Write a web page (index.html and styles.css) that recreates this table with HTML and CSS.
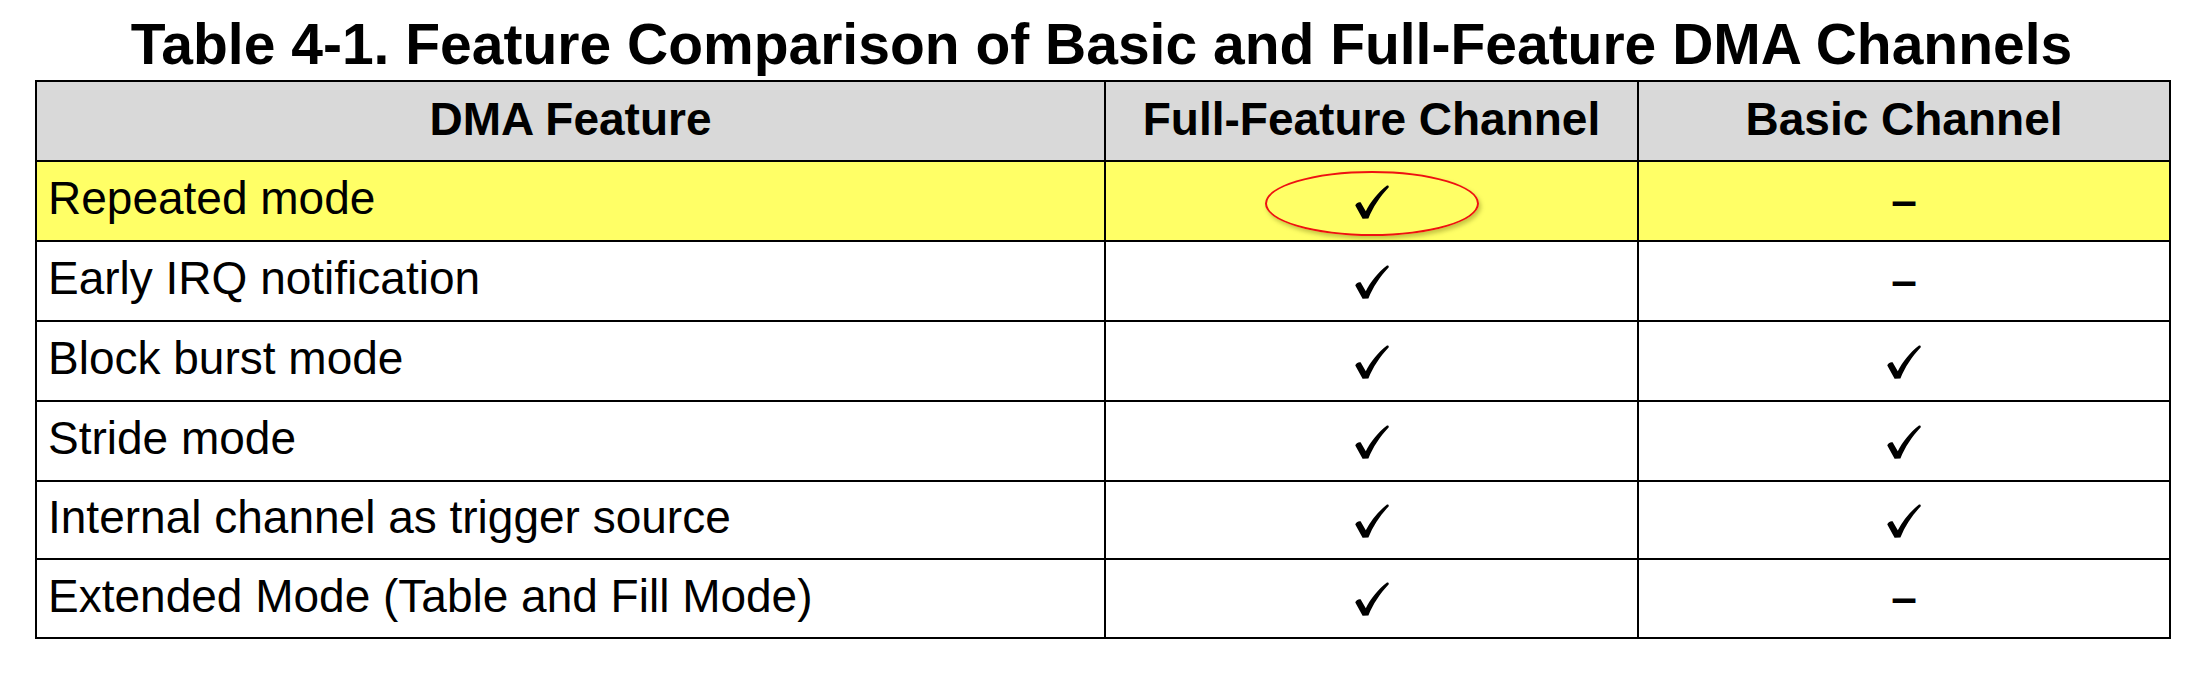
FILE: index.html
```html
<!DOCTYPE html>
<html lang="en">
<head>
<meta charset="utf-8">
<title>Table 4-1. Feature Comparison of Basic and Full-Feature DMA Channels</title>
<link rel="stylesheet" href="styles.css">
</head>
<body>
<h1 class="caption">Table 4-1. Feature Comparison of Basic and Full-Feature DMA Channels</h1>
<table class="cmp">
  <colgroup>
    <col class="c-feature">
    <col class="c-full">
    <col class="c-basic">
  </colgroup>
  <thead>
    <tr class="row-head">
      <th>DMA Feature</th>
      <th>Full-Feature Channel</th>
      <th class="last">Basic Channel</th>
    </tr>
  </thead>
  <tbody>
    <tr class="row hl">
      <td class="name">Repeated mode</td>
      <td class="mark"><span class="chk circled"><svg viewBox="0 0 34 34" width="34" height="34" aria-label="yes"><path d="M0.3 20.6C0.8 18.4 3.6 16.6 5.6 17.3L10.8 26.3C15.5 17 22.5 8 32 0.6C33.2 0.2 34.2 1.3 33.6 2.4C25 11.5 18 22 13.4 33.4L7.6 33.8Z"/></svg><span class="ring"></span></span></td>
      <td class="mark na last">–</td>
    </tr>
    <tr class="row">
      <td class="name">Early IRQ notification</td>
      <td class="mark"><span class="chk"><svg viewBox="0 0 34 34" width="34" height="34" aria-label="yes"><path d="M0.3 20.6C0.8 18.4 3.6 16.6 5.6 17.3L10.8 26.3C15.5 17 22.5 8 32 0.6C33.2 0.2 34.2 1.3 33.6 2.4C25 11.5 18 22 13.4 33.4L7.6 33.8Z"/></svg></span></td>
      <td class="mark na last">–</td>
    </tr>
    <tr class="row">
      <td class="name">Block burst mode</td>
      <td class="mark"><span class="chk"><svg viewBox="0 0 34 34" width="34" height="34" aria-label="yes"><path d="M0.3 20.6C0.8 18.4 3.6 16.6 5.6 17.3L10.8 26.3C15.5 17 22.5 8 32 0.6C33.2 0.2 34.2 1.3 33.6 2.4C25 11.5 18 22 13.4 33.4L7.6 33.8Z"/></svg></span></td>
      <td class="mark last"><span class="chk"><svg viewBox="0 0 34 34" width="34" height="34" aria-label="yes"><path d="M0.3 20.6C0.8 18.4 3.6 16.6 5.6 17.3L10.8 26.3C15.5 17 22.5 8 32 0.6C33.2 0.2 34.2 1.3 33.6 2.4C25 11.5 18 22 13.4 33.4L7.6 33.8Z"/></svg></span></td>
    </tr>
    <tr class="row">
      <td class="name">Stride mode</td>
      <td class="mark"><span class="chk"><svg viewBox="0 0 34 34" width="34" height="34" aria-label="yes"><path d="M0.3 20.6C0.8 18.4 3.6 16.6 5.6 17.3L10.8 26.3C15.5 17 22.5 8 32 0.6C33.2 0.2 34.2 1.3 33.6 2.4C25 11.5 18 22 13.4 33.4L7.6 33.8Z"/></svg></span></td>
      <td class="mark last"><span class="chk"><svg viewBox="0 0 34 34" width="34" height="34" aria-label="yes"><path d="M0.3 20.6C0.8 18.4 3.6 16.6 5.6 17.3L10.8 26.3C15.5 17 22.5 8 32 0.6C33.2 0.2 34.2 1.3 33.6 2.4C25 11.5 18 22 13.4 33.4L7.6 33.8Z"/></svg></span></td>
    </tr>
    <tr class="row short1">
      <td class="name">Internal channel as trigger source</td>
      <td class="mark"><span class="chk"><svg viewBox="0 0 34 34" width="34" height="34" aria-label="yes"><path d="M0.3 20.6C0.8 18.4 3.6 16.6 5.6 17.3L10.8 26.3C15.5 17 22.5 8 32 0.6C33.2 0.2 34.2 1.3 33.6 2.4C25 11.5 18 22 13.4 33.4L7.6 33.8Z"/></svg></span></td>
      <td class="mark last"><span class="chk"><svg viewBox="0 0 34 34" width="34" height="34" aria-label="yes"><path d="M0.3 20.6C0.8 18.4 3.6 16.6 5.6 17.3L10.8 26.3C15.5 17 22.5 8 32 0.6C33.2 0.2 34.2 1.3 33.6 2.4C25 11.5 18 22 13.4 33.4L7.6 33.8Z"/></svg></span></td>
    </tr>
    <tr class="row final">
      <td class="name">Extended Mode (Table and Fill Mode)</td>
      <td class="mark"><span class="chk"><svg viewBox="0 0 34 34" width="34" height="34" aria-label="yes"><path d="M0.3 20.6C0.8 18.4 3.6 16.6 5.6 17.3L10.8 26.3C15.5 17 22.5 8 32 0.6C33.2 0.2 34.2 1.3 33.6 2.4C25 11.5 18 22 13.4 33.4L7.6 33.8Z"/></svg></span></td>
      <td class="mark na last">–</td>
    </tr>
  </tbody>
</table>
</body>
</html>
```

FILE: styles.css
```css
html, body {
  margin: 0;
  padding: 0;
  background: #ffffff;
}

body {
  font-family: "Liberation Sans", Arial, sans-serif;
  color: #000000;
}

.caption {
  margin: 0;
  padding-top: 16px;
  font-size: 57px;
  line-height: 57px;
  font-weight: bold;
  text-align: center;
}

.cmp {
  margin: 7px 0 0 35px;
  width: 2136px;
  table-layout: fixed;
  border-collapse: separate;
  border-spacing: 0;
  border: 2px solid #000000;
  font-size: 46px;
  line-height: 46px;
}

.c-feature { width: 1069px; }
.c-full { width: 533px; }
.c-basic { width: 530px; }

.cmp th,
.cmp td {
  padding: 0 0 6px 0;
  border-right: 2px solid #000000;
  border-bottom: 2px solid #000000;
  vertical-align: middle;
}

.cmp .last {
  border-right: none;
}

.row-head {
  height: 80px;
}

.row-head th {
  background: #d9d9d9;
  font-weight: bold;
  text-align: center;
  padding-bottom: 4px;
}

.row {
  height: 80px;
}

.row.short1 {
  height: 78px;
}

.row.final {
  height: 77px;
}

.row.final td {
  border-bottom: none;
}

.row.hl td {
  background: #ffff66;
}

.cmp td.name {
  padding-left: 11px;
  text-align: left;
}

.cmp td.mark {
  text-align: center;
}

.cmp td.na {
  padding-bottom: 3px;
  font-weight: bold;
}

.chk {
  display: inline-block;
  width: 34px;
  height: 34px;
  vertical-align: middle;
  position: relative;
}

.chk svg {
  display: block;
  fill: #000000;
}

.ring {
  position: absolute;
  left: -90px;
  top: -14px;
  width: 214px;
  height: 65px;
  box-sizing: border-box;
  border: 2px solid #ee1111;
  border-radius: 50%;
  box-shadow: 2px 3px 4px rgba(90, 90, 0, 0.35);
}
```
